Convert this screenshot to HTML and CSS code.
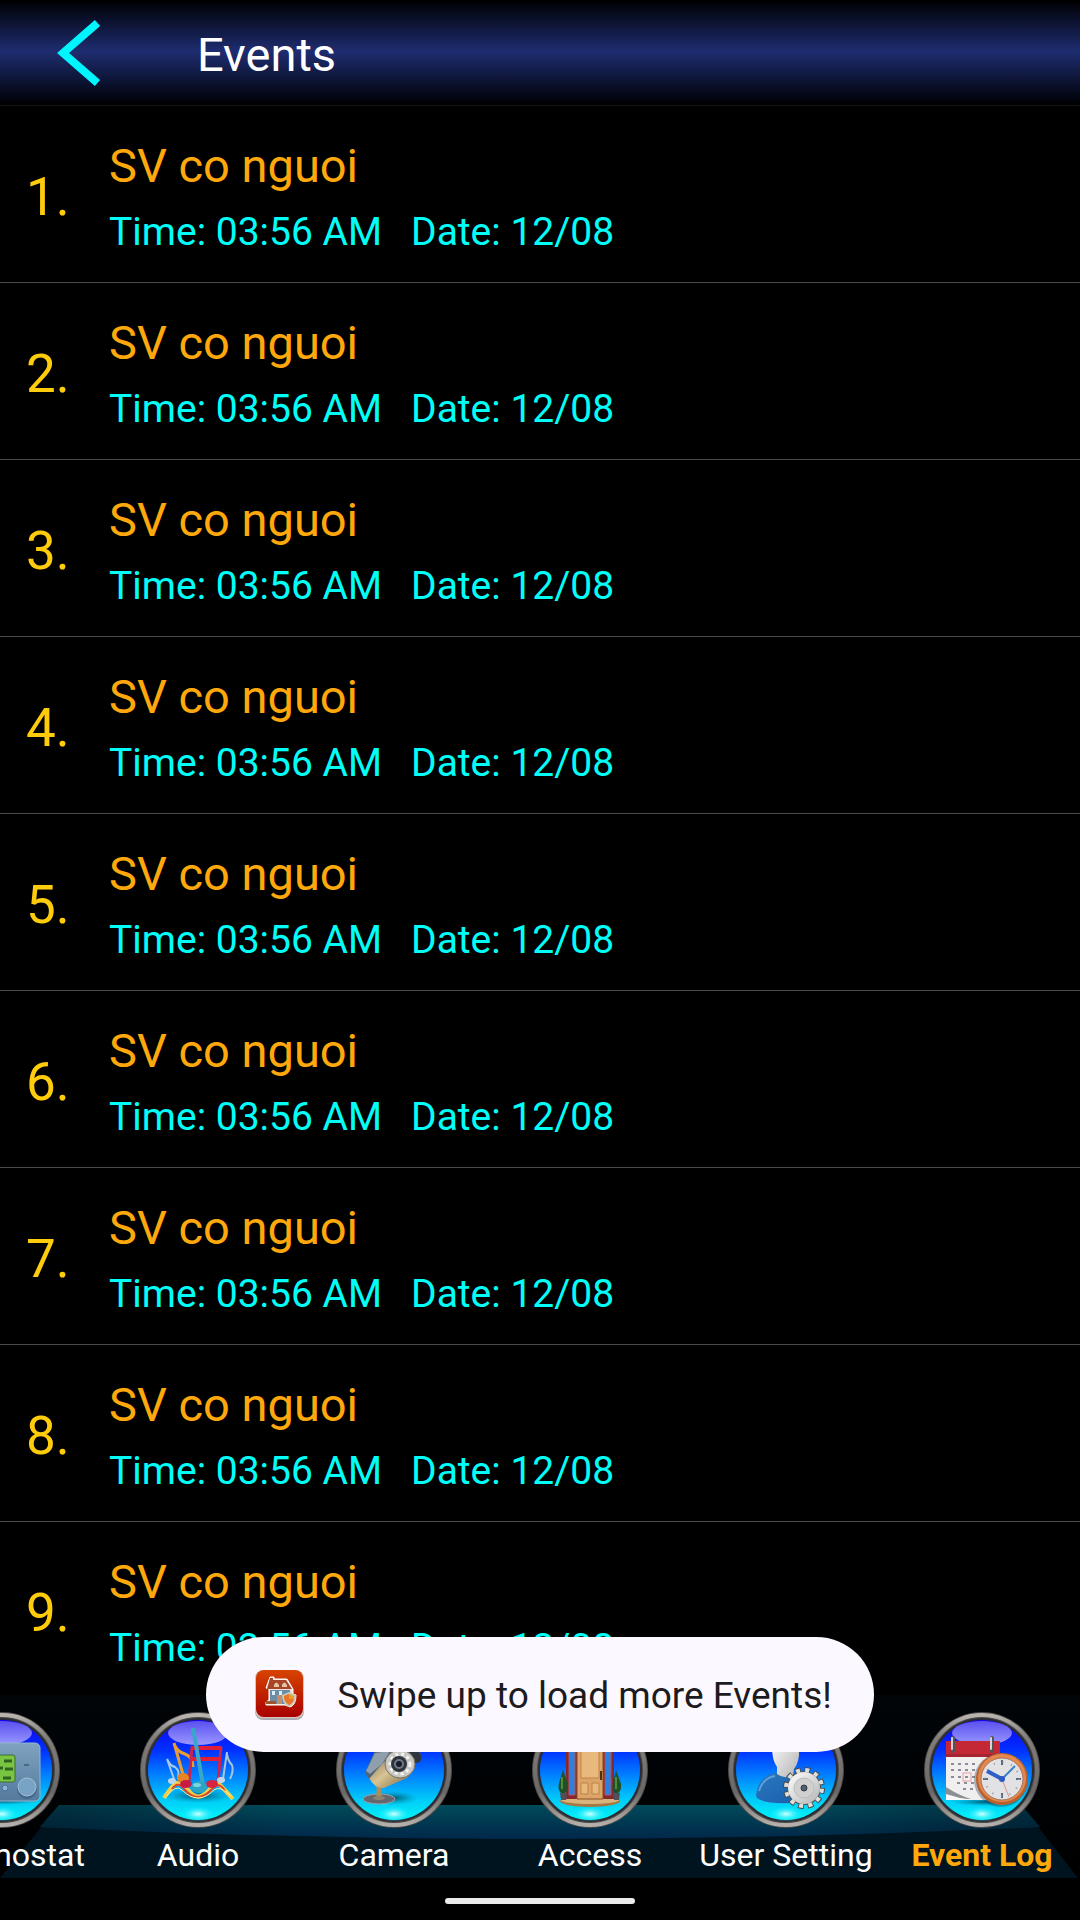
FILE: index.html
```html
<!DOCTYPE html>
<html lang="en">
<head>
<meta charset="utf-8">
<meta name="viewport" content="width=device-width, initial-scale=1">
<title>Events</title>
<link rel="stylesheet" href="styles.css">
</head>
<body>
<svg class="defs" width="0" height="0" aria-hidden="true">
  <defs>
    <linearGradient id="disk" x1="0" y1="0" x2="0" y2="1">
      <stop offset="0" stop-color="#1400f0"/><stop offset=".3" stop-color="#0030ff"/>
      <stop offset=".55" stop-color="#0080ff"/><stop offset=".8" stop-color="#00ccf8"/><stop offset="1" stop-color="#00f4f8"/>
    </linearGradient>
    <linearGradient id="ring" x1="0" y1="0" x2="0" y2="1">
      <stop offset="0" stop-color="#b8b4ae"/><stop offset=".2" stop-color="#827e7a"/>
      <stop offset=".7" stop-color="#6a6866"/><stop offset="1" stop-color="#b4b0ac"/>
    </linearGradient>
    <linearGradient id="gloss" x1="0" y1="0" x2="0" y2="1">
      <stop offset="0" stop-color="#5a50f0"/><stop offset="1" stop-color="#9a98ff"/>
    </linearGradient>
    <radialGradient id="glow"><stop offset="0" stop-color="#d8ffff"/><stop offset="1" stop-color="#00f0ff" stop-opacity="0"/></radialGradient>
    <radialGradient id="shade"><stop offset="0" stop-color="#003848" stop-opacity=".8"/><stop offset="1" stop-color="#0080a0" stop-opacity="0"/></radialGradient>
    <linearGradient id="steel" x1="0" y1="0" x2="0" y2="1"><stop offset="0" stop-color="#7fa3c0"/><stop offset="1" stop-color="#547a9c"/></linearGradient>
    <linearGradient id="brass" x1="0" y1="0" x2="1" y2="1"><stop offset="0" stop-color="#6a5a3c"/><stop offset=".5" stop-color="#d8c494"/><stop offset="1" stop-color="#6e5a36"/></linearGradient>
    <linearGradient id="silver" x1="0" y1="0" x2="1" y2="1"><stop offset="0" stop-color="#ffffff"/><stop offset="1" stop-color="#b4b4b4"/></linearGradient>
    <linearGradient id="shirt" x1="0" y1="0" x2="1" y2="1"><stop offset="0" stop-color="#2878c0"/><stop offset="1" stop-color="#1c5ca8"/></linearGradient>
    <linearGradient id="redtile" x1="0" y1="0" x2="0" y2="1"><stop offset="0" stop-color="#d84400"/><stop offset="1" stop-color="#a80000"/></linearGradient>
    <symbol id="badge" viewBox="0 0 116 116">
      <circle cx="58" cy="58" r="58" fill="#4c4a49"/>
      <circle cx="58" cy="58" r="55" fill="none" stroke="url(#ring)" stroke-width="4"/>
      <circle cx="58" cy="58" r="52" fill="#2a2c34"/>
      <circle cx="58" cy="58" r="50" fill="url(#disk)"/>
      <ellipse cx="58" cy="21" rx="30" ry="12" fill="url(#gloss)"/>
      <ellipse cx="58" cy="102" rx="17" ry="8" fill="url(#glow)"/>
    </symbol>
  </defs>
</svg>

<header class="topbar">
  <button class="back" type="button" aria-label="Back">
    <svg width="44" height="68" viewBox="0 0 44 68" aria-hidden="true"><path d="M40.500 4 6 34 40.500 64" fill="none" stroke="#00f6ff" stroke-width="8"/></svg>
  </button>
  <h1 class="title">Events</h1>
</header>

<main class="events">
  <ol class="event-list">
    <li class="event"><span class="num">1.</span><div><h2 class="name">SV co nguoi</h2><p class="meta"><span>Time: 03:56 AM</span><span>Date: 12/08</span></p></div></li>
    <li class="event"><span class="num">2.</span><div><h2 class="name">SV co nguoi</h2><p class="meta"><span>Time: 03:56 AM</span><span>Date: 12/08</span></p></div></li>
    <li class="event"><span class="num">3.</span><div><h2 class="name">SV co nguoi</h2><p class="meta"><span>Time: 03:56 AM</span><span>Date: 12/08</span></p></div></li>
    <li class="event"><span class="num">4.</span><div><h2 class="name">SV co nguoi</h2><p class="meta"><span>Time: 03:56 AM</span><span>Date: 12/08</span></p></div></li>
    <li class="event"><span class="num">5.</span><div><h2 class="name">SV co nguoi</h2><p class="meta"><span>Time: 03:56 AM</span><span>Date: 12/08</span></p></div></li>
    <li class="event"><span class="num">6.</span><div><h2 class="name">SV co nguoi</h2><p class="meta"><span>Time: 03:56 AM</span><span>Date: 12/08</span></p></div></li>
    <li class="event"><span class="num">7.</span><div><h2 class="name">SV co nguoi</h2><p class="meta"><span>Time: 03:56 AM</span><span>Date: 12/08</span></p></div></li>
    <li class="event"><span class="num">8.</span><div><h2 class="name">SV co nguoi</h2><p class="meta"><span>Time: 03:56 AM</span><span>Date: 12/08</span></p></div></li>
    <li class="event"><span class="num">9.</span><div><h2 class="name">SV co nguoi</h2><p class="meta"><span>Time: 03:56 AM</span><span>Date: 12/08</span></p></div></li>
  </ol>
</main>

<nav class="dock" aria-label="Sections">
  <svg class="shelf" viewBox="0 0 1080 73" preserveAspectRatio="none" aria-hidden="true">
    <defs>
      <linearGradient id="shelfTop" x1="0" y1="0" x2="0" y2="34" gradientUnits="userSpaceOnUse"><stop offset="0" stop-color="#014b5a"/><stop offset=".6" stop-color="#003550"/><stop offset="1" stop-color="#02284a"/></linearGradient>
      <linearGradient id="shelfFade"><stop offset="0" stop-color="#001420" stop-opacity=".5"/><stop offset=".25" stop-color="#001420" stop-opacity="0"/><stop offset=".75" stop-color="#001420" stop-opacity="0"/><stop offset="1" stop-color="#001420" stop-opacity=".5"/></linearGradient>
    </defs>
    <path d="M59 0H1021L1078 73H0Z" fill="#001420"/>
    <path d="M59 0H1021L1040 22Q540 46 40 22Z" fill="url(#shelfTop)"/>
    <path d="M59 0H1021L1040 22Q540 46 40 22Z" fill="url(#shelfFade)"/>
  </svg>
  <button class="tab" type="button">
    <svg class="icon" viewBox="0 0 116 116" aria-hidden="true"><use href="#badge"/>
      <ellipse cx="58" cy="89" rx="40" ry="4" fill="url(#shade)"/>
      <rect x="20" y="31" width="76" height="58" rx="5" fill="url(#steel)" stroke="#96b4ca"/>
      <rect x="28" y="43" width="43" height="27" rx="2" fill="#79c440" stroke="#416a40"/>
      <path d="M33 48h10M60 49h8M33 56h12M56 56h3M61 57h8M33 64h9M59 66h8" stroke="#2c6420" stroke-width="3"/>
      <path d="M80 53h5" stroke="#466a86" stroke-width="2"/>
      <circle cx="61" cy="76" r="3" fill="#8ab4d0" stroke="#46709a"/>
      <circle cx="83" cy="77" r="10" fill="#43678a"/><circle cx="83" cy="75" r="9" fill="#79a3c4" stroke="#a0c0d8"/>
    </svg>
    <span class="label">Thermostat</span>
  </button>
  <button class="tab" type="button">
    <svg class="icon" viewBox="0 0 116 116" aria-hidden="true"><use href="#badge"/>
      <ellipse cx="58" cy="84" rx="34" ry="7" fill="url(#shade)"/>
      <g fill="none">
        <path d="M27 47 34 67M27 47Q30 54 35 55Q40 59 38 65" stroke="#a4cce8" stroke-width="2"/>
        <path d="M34 31 44 66M35 34Q38 40 45 42Q53 45 53 55" stroke="#e89c34" stroke-width="3"/>
        <path d="M87 40 83 67M87 42Q88 49 92 53Q94 59 90 67" stroke="#a8c4dc" stroke-width="2"/>
        <path d="M52 35 49 69M81 35 78 70" stroke="#c82450" stroke-width="3"/>
        <path d="M51 36H82M51 47H81" stroke="#e02038" stroke-width="4"/>
        <path d="M24 86Q33 72 37 71Q45 73 50 80Q58 89 67 80Q75 71 79 72Q84 77 93 87" stroke="#f4d048" stroke-width="4"/>
        <path d="M32 77Q38 68 45 78Q58 92 71 78Q79 68 85 79" stroke="#d84828" stroke-width="2"/>
        <path d="M27 84Q36 72 42 78Q58 94 74 78Q80 73 91 84" stroke="#fff0a0"/>
      </g>
      <ellipse cx="32" cy="69" rx="4" ry="3" fill="#bcd8e8"/><ellipse cx="43" cy="66" rx="6" ry="5" fill="#e88424"/>
      <ellipse cx="46" cy="72" rx="6" ry="4" fill="#c81c44"/><ellipse cx="72" cy="72" rx="6" ry="4" fill="#d82440"/>
      <ellipse cx="81" cy="68" rx="4" ry="3" fill="#c4d8e4"/>
      <path d="M53 16 63 73" stroke="#38a8c8" stroke-width="4"/><ellipse cx="59" cy="75" rx="8" ry="6" fill="#2ca4c4"/><ellipse cx="57" cy="73" rx="4" ry="2" fill="#7cd4e4"/>
    </svg>
    <span class="label">Audio</span>
  </button>
  <button class="tab" type="button">
    <svg class="icon" viewBox="0 0 116 116" aria-hidden="true"><use href="#badge"/>
      <ellipse cx="57" cy="86" rx="25" ry="7" fill="url(#shade)"/>
      <ellipse cx="43" cy="87" rx="16" ry="5" fill="#65676f" stroke="#a0a0a4"/>
      <path d="M43 70V87" stroke="#a8905c" stroke-width="5"/><ellipse cx="43" cy="86" rx="6" ry="2" fill="#8c8470"/>
      <path d="M32 64 60 38 78 58 71 66 48 76Q38 77 32 64Z" fill="url(#brass)"/>
      <path d="M29 61 39 38 60 26 80 34Q88 43 84 50L76 52 60 38 45 53 33 67Z" fill="#526478"/>
      <path d="M30 59 39 41 54 39 46 52 34 62Z" fill="#8f9fae"/>
      <path d="M70 35Q90 39 84 50L76 52Z" fill="#303640"/>
      <ellipse cx="64" cy="52" rx="15" ry="14" fill="#c8c8c4" stroke="#77705f"/>
      <circle cx="64" cy="52" r="10" fill="none" stroke="#f4f4f0" stroke-width="3" stroke-dasharray="3 3"/>
      <circle cx="63" cy="52" r="8" fill="#30343c"/><circle cx="63" cy="52" r="5" fill="#70788c"/><circle cx="63" cy="52" r="3" fill="#181c26"/>
    </svg>
    <span class="label">Camera</span>
  </button>
  <button class="tab" type="button">
    <svg class="icon" viewBox="0 0 116 116" aria-hidden="true"><use href="#badge"/>
      <ellipse cx="58" cy="89" rx="30" ry="6" fill="#a87844"/><ellipse cx="58" cy="88" rx="29" ry="4" fill="#d8b47c"/>
      <path d="M34 24H82V87H34Z" fill="#842830"/>
      <path d="M37 30H43V83H37ZM73 30H79V83H73Z" fill="#2c80e0" stroke="#b45458"/>
      <path d="M45 28H71V87H45Z" fill="#dca467" stroke="#8c4c24"/>
      <path d="M49 33H67V66H49ZM49 71H56V82H49ZM60 71H67V82H60Z" fill="#e8b87c" stroke="#bc8448"/>
      <path d="M69 59V68" stroke="#4c3014" stroke-width="2"/>
      <path d="M31 58 36 72Q37 80 31 82Q25 80 27 71ZM84 58 89 72Q90 80 84 82Q79 80 81 71Z" fill="#205028"/>
      <path d="M30 65V77M84 65V77" stroke="#4c8c38" stroke-width="2"/>
      <path d="M28 81H35L34 88H29ZM81 81H88L87 88H82Z" fill="#50505a"/>
    </svg>
    <span class="label">Access</span>
  </button>
  <button class="tab" type="button">
    <svg class="icon" viewBox="0 0 116 116" aria-hidden="true"><use href="#badge"/>
      <path d="M28 83Q31 64 47 61H68Q81 66 82 87Q66 92 50 91Q28 90 28 83Z" fill="url(#shirt)"/>
      <path d="M31 79Q35 66 47 64" fill="none" stroke="#5ca0d8" stroke-width="2"/>
      <path d="M44 35Q44 22 58 22Q71 22 71 37Q72 49 66 57L65 63Q57 68 49 62L49 55Q44 48 44 35Z" fill="url(#silver)"/>
      <circle cx="76" cy="76" r="18" fill="none" stroke="#484848" stroke-width="6" stroke-dasharray="5.500 3.925"/>
      <circle cx="76" cy="76" r="17" fill="#505050"/>
      <circle cx="76" cy="76" r="18" fill="none" stroke="#dededc" stroke-width="4" stroke-dasharray="4 5.425" stroke-dashoffset="-.75"/>
      <circle cx="76" cy="76" r="16" fill="url(#silver)"/>
      <circle cx="76" cy="76" r="10" fill="#d0d0d0" stroke="#bcbcbc"/>
      <circle cx="76" cy="76" r="3" fill="#50606c" stroke="#303840"/>
    </svg>
    <span class="label">User Setting</span>
  </button>
  <button class="tab active" type="button" aria-current="page">
    <svg class="icon" viewBox="0 0 116 116" aria-hidden="true"><use href="#badge"/>
      <ellipse cx="62" cy="90" rx="36" ry="4" fill="url(#shade)"/>
      <path d="M22 29H76V88H22Z" fill="#f0eeee"/><path d="M22 29H76V45H22Z" fill="#c42834"/><path d="M22 42H76V45H22Z" fill="#a42430"/>
      <path d="M27 52H53M27 58H53M27 65H53M33 71H53M39 77H53" stroke="#8c8c98" stroke-width="2" stroke-dasharray="3 4"/>
      <rect x="39" y="61" width="8" height="8" fill="none" stroke="#e8a0a4"/>
      <path d="M22 75Q34 83 47 87Q33 87 22 83Z" fill="#8c9096"/><path d="M22 82Q34 86 47 88H22Z" fill="#f8f8f8"/>
      <path d="M29 26V39M68 26V39" stroke="#545458" stroke-width="4" stroke-linecap="round"/><path d="M28 26V37M67 26V37" stroke="#d4d4d8" stroke-linecap="round" stroke-width="2"/>
      <circle cx="77" cy="68" r="27" fill="#183850" opacity=".35"/>
      <circle cx="78" cy="67" r="26" fill="#bc602c"/><circle cx="78" cy="66" r="24" fill="#e48850"/><circle cx="78" cy="67" r="21" fill="#e2e2e4" stroke="#a87458"/>
      <path d="M78 48V53M78 81V86M59 67H64M92 67H97" stroke="#5c6880" stroke-width="2"/>
      <circle cx="78" cy="67" r="17" fill="none" stroke="#90949c" stroke-width="2" stroke-dasharray="1 7.901" stroke-dashoffset="-8.901"/>
      <path d="M78 67 85 85" stroke="#d89488"/>
      <path d="M63 59 78 67" stroke="#2c60c8" stroke-width="4"/><path d="M78 67 91 54" stroke="#3c80c8" stroke-width="2"/>
      <circle cx="78" cy="67" r="3" fill="#2c58c4"/>
    </svg>
    <span class="label">Event Log</span>
  </button>
</nav>

<div class="gesture"><span class="pill"></span></div>

<div class="toast-layer">
  <div class="toast" role="status">
    <svg width="52" height="52" viewBox="0 -1 52 52" aria-hidden="true">
      <rect x="1" y="3" width="49" height="48" rx="8" fill="#b0aaae"/><rect x="1" y="1" width="49" height="48" rx="8" fill="#d8c4c0"/>
      <rect x="2" y="1" width="47" height="47" rx="8" fill="url(#redtile)"/>
      <path d="M16 8H20V10H33L39 20V25L42 26Q42 36 36 38L31 36H12V33L15 31V20L12 19Z" fill="#ece4dc" stroke="#fff"/>
      <path d="M16 9H19V11H32L38 20H13Z" fill="#a84428"/><path d="M20 16Q22 11 25 16V18H20ZM28 16Q30 11 33 16V18H28Z" fill="#e4c4a4"/>
      <path d="M16 21H36V35H16Z" fill="#6c8ca8"/><path d="M18 22H21V26H18ZM25 22H28V26H25Z" fill="#d8eef8"/><path d="M12 32H22V35H12Z" fill="#a0542c"/><path d="M23 26H28V35H23Z" fill="#c48c68"/>
      <path d="M35 23 42 26Q42 35 35 38Q28 35 28 26Z" fill="#c8c8b8"/><path d="M35 25 40 27Q40 33 35 36Q30 33 30 27Z" fill="#e8a028"/><path d="M35 25V36Q30 33 30 27ZM35 30H40Q39 34 35 36Z" fill="#ec7428"/>
    </svg>
    <span class="message">Swipe up to load more Events!</span>
  </div>
</div>
</body>
</html>
```
FILE: styles.css
```css
* { box-sizing: border-box; }

body {
  margin: 0;
  height: 100vh;
  display: flex;
  flex-direction: column;
  overflow: hidden;
  background: #000;
  color: #fff;
  font-family: Roboto, sans-serif;
}

h1, h2, p, ol { margin: 0; padding: 0; font-weight: 400; }

button {
  border: 0;
  padding: 0;
  background: none;
  color: inherit;
  font: inherit;
}

.defs { position: absolute; }

.topbar {
  flex: none;
  display: flex;
  align-items: center;
  gap: 96px;
  padding: 19px 57px 18px;
  border-bottom: 1px solid #141414;
  background: linear-gradient(#000 0, #060a1c 12%, #1e2d70 49%, #060a1c 88%, #000 100%);
}

.back, .back svg { display: block; }

.title {
  padding-top: 4px;
  font-size: 47px;
  line-height: 56px;
}

.events {
  flex: 1;
  min-height: 0;
  overflow: hidden;
}

.event-list { list-style: none; }

.event {
  display: grid;
  grid-template-columns: 83px 1fr;
  align-items: center;
  padding: 32px 0 27px 26px;
  border-bottom: 1px solid #4a4a4a;
}

.num {
  color: #ffcc0c;
  font-size: 53px;
  line-height: 62px;
}

.name {
  color: #ffa80c;
  font-size: 47px;
  line-height: 56px;
}

.meta {
  display: flex;
  gap: 29px;
  padding-top: 15px;
  color: #00fff8;
  font-size: 39px;
  line-height: 46px;
}

.dock {
  position: relative;
  flex: none;
  display: flex;
  justify-content: flex-end;
  overflow: hidden;
  padding: 17px 0 4px;
  background: linear-gradient(#010507, #000204 60%, #000);
}

.shelf {
  position: absolute;
  left: 0;
  bottom: 0;
  width: 100%;
  height: 73px;
}

.tab {
  position: relative;
  flex: none;
  width: 196px;
  display: flex;
  flex-direction: column;
  align-items: center;
  gap: 8px;
}

.icon { width: 116px; height: 116px; }

.label {
  font-size: 32px;
  line-height: 38px;
  white-space: nowrap;
}

.active .label { color: #ffa80c; font-weight: 700; }

.gesture {
  flex: none;
  display: flex;
  justify-content: center;
  padding: 20px 0 16px;
}

.pill {
  width: 190px;
  height: 6px;
  border-radius: 3px;
  background: #ebebeb;
}

.toast-layer {
  position: fixed;
  left: 0;
  right: 0;
  bottom: 168px;
  display: flex;
  justify-content: center;
}

.toast {
  display: flex;
  align-items: center;
  gap: 31px;
  padding: 31px 42px 32px 48px;
  border-radius: 58px;
  background: #fcf8ff;
  color: #1c1b20;
}

.message {
  padding-top: 4px;
  font-size: 37px;
  line-height: 48px;
  white-space: nowrap;
}
```
